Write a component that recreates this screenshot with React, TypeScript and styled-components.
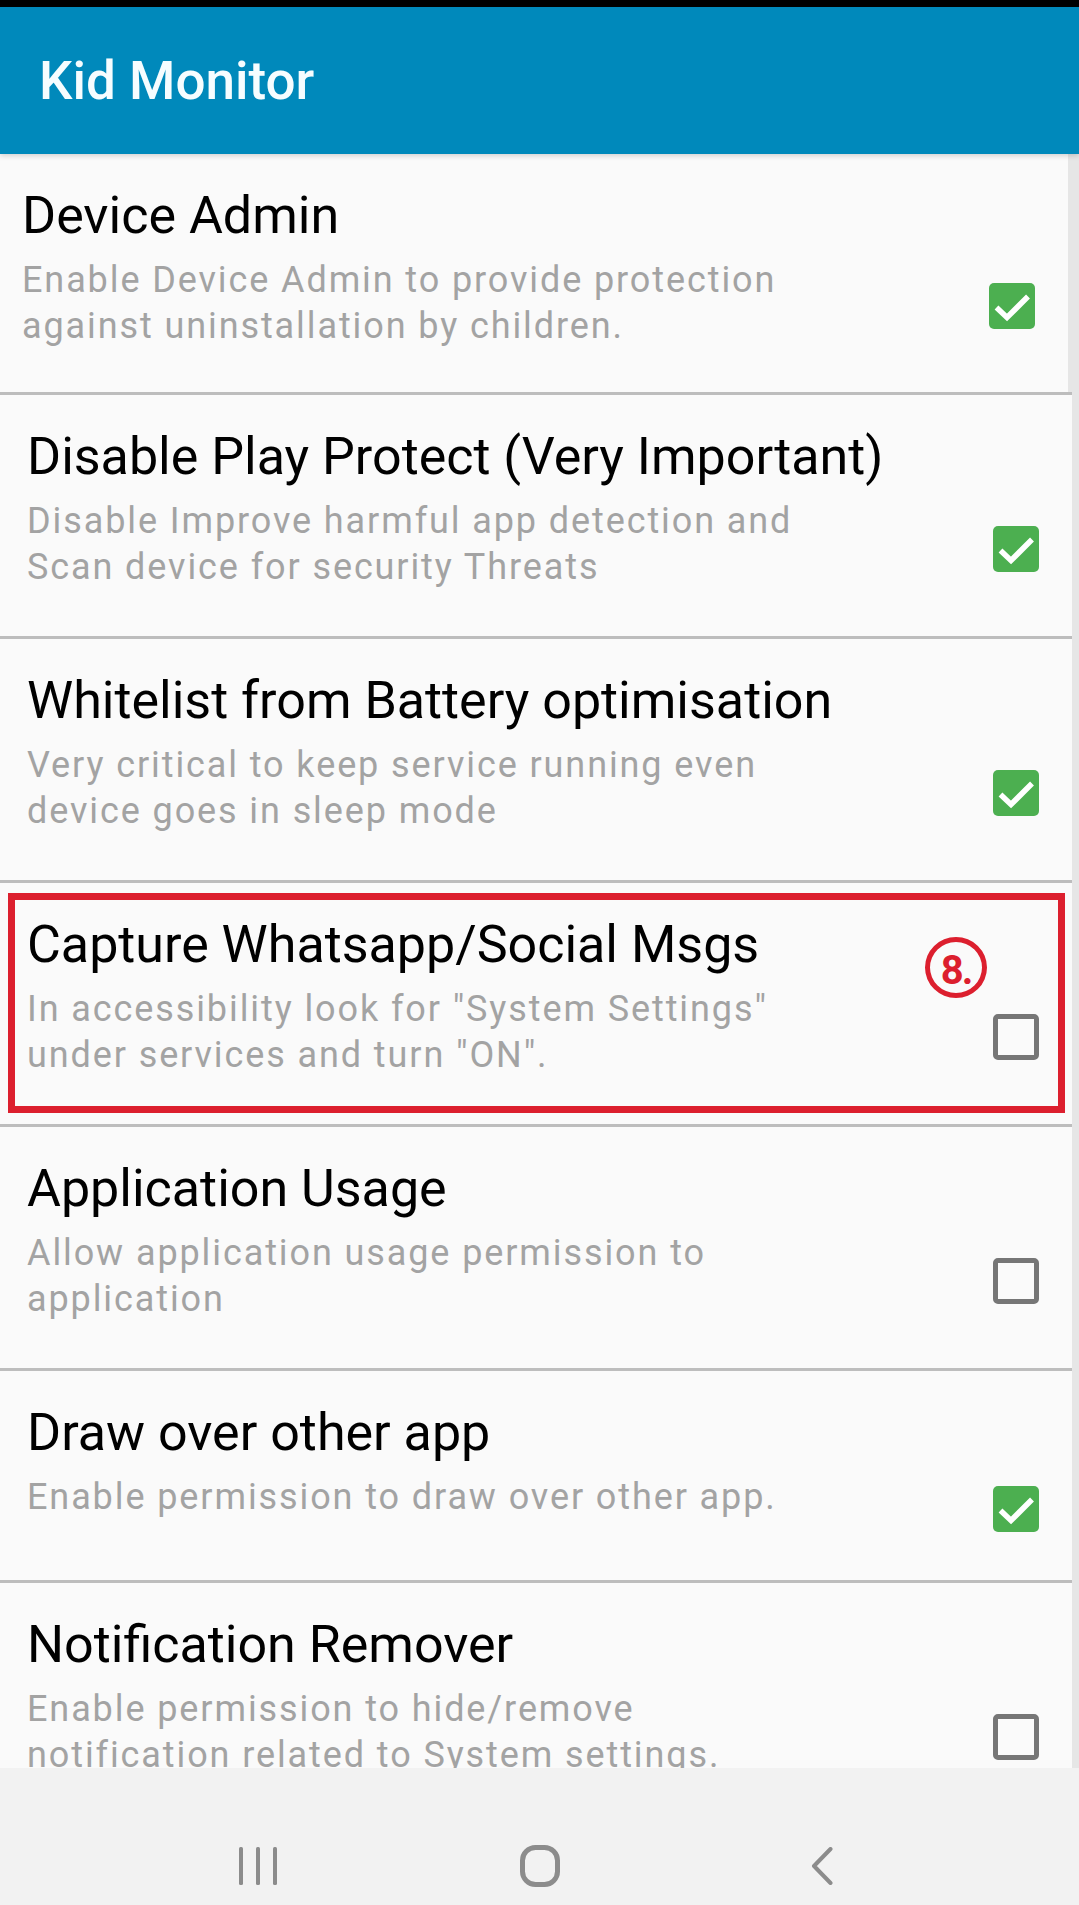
import React from "react";
import styled, { createGlobalStyle } from "styled-components";

const GlobalStyle = createGlobalStyle`
  html, body { margin: 0; padding: 0; background: #e6e6e6; }
  body { font-family: Roboto, "Noto Sans", "Liberation Sans", sans-serif; }
  * { box-sizing: border-box; }
`;

const Screen = styled.div`
  width: 1079px;
  height: 1905px;
  display: flex;
  flex-direction: column;
  overflow: hidden;
  background: #e6e6e6;
`;

const StatusBar = styled.div`
  height: 7px;
  flex-shrink: 0;
  background: #000;
`;

const AppBar = styled.header`
  height: 147px;
  flex-shrink: 0;
  display: flex;
  align-items: center;
  padding-left: 39px;
  background: #0089bb;
  box-shadow: 0 2px 5px rgba(0, 0, 0, 0.16);
  position: relative;
  z-index: 1;
`;

const AppTitle = styled.h1`
  margin: 0;
  font-family: Roboto, "Noto Sans", sans-serif;
  font-weight: 500;
  font-size: 53px;
  line-height: 60px;
  color: #f6fdff;
`;

const List = styled.main`
  flex: 1;
  min-height: 0;
  overflow: hidden;
  display: flex;
  flex-direction: column;
`;

const Item = styled.section<{ $first?: boolean }>`
  position: relative;
  flex-shrink: 0;
  display: flex;
  width: ${(p) => (p.$first ? 1068 : 1072)}px;
  min-height: ${(p) => (p.$first ? 209 : 212)}px;
  background: #fafafa;
  border-top: ${(p) => (p.$first ? "none" : "3px solid #bdbdbd")};
`;

const TextCol = styled.div<{ $first?: boolean }>`
  flex: 1;
  min-width: 0;
  padding: 32px 0 ${(p) => (p.$first ? 43 : 46)}px ${(p) => (p.$first ? 22 : 27)}px;
`;

const Title = styled.h2`
  margin: 0;
  font-weight: 400;
  font-size: 52px;
  line-height: 60px;
  color: #000;
  white-space: nowrap;
`;

const Subtitle = styled.p`
  margin: 11px 0 0;
  font-size: 36px;
  line-height: 46px;
  letter-spacing: 1.9px;
  color: #a3a3a3;
`;

const Line = styled.span`
  display: block;
  white-space: nowrap;
`;

const CheckCol = styled.div`
  flex-shrink: 0;
  display: flex;
  align-items: center;
  padding: 66px 33px 0 0;
`;

const Box = styled.span<{ $checked: boolean }>`
  width: 46px;
  height: 46px;
  border-radius: 5px;
  display: flex;
  align-items: center;
  justify-content: center;
  background: ${(p) => (p.$checked ? "#4caf50" : "transparent")};
  border: ${(p) => (p.$checked ? "none" : "5px solid #767676")};
`;

const Highlight = styled.div`
  position: absolute;
  left: 8px;
  top: 10px;
  width: 1057px;
  height: 220px;
  border: 7px solid #dc1f2e;
  pointer-events: none;
`;

const Badge = styled.div`
  position: absolute;
  left: 925px;
  top: 54px;
  width: 62px;
  height: 61px;
  border-radius: 50%;
  border: 5px solid #dc1f2e;
  display: flex;
  align-items: center;
  justify-content: center;
  padding-top: 6px;
  color: #dc1f2e;
  font-weight: 700;
  font-size: 40px;
  line-height: 1;
  letter-spacing: -2px;
`;

const NavBar = styled.nav`
  height: 137px;
  flex-shrink: 0;
  display: flex;
  justify-content: center;
  align-items: flex-start;
  padding-top: 77px;
  background: #f2f2f2;
`;

const NavSlot = styled.div`
  width: 282px;
  height: 42px;
  display: flex;
  align-items: center;
  justify-content: center;
`;

const Check = () => (
  <svg width="46" height="46" viewBox="0 0 46 46">
    <polyline
      points="7.5,24.5 18,34.5 39,13.5"
      fill="none"
      stroke="#fff"
      strokeWidth="5.5"
    />
  </svg>
);

const RecentsIcon = () => (
  <svg width="38" height="38" viewBox="0 0 38 38">
    <rect x="0" y="0" width="4" height="38" rx="1.5" fill="#8c8c8c" />
    <rect x="17" y="0" width="4" height="38" rx="1.5" fill="#8c8c8c" />
    <rect x="34" y="0" width="4" height="38" rx="1.5" fill="#8c8c8c" />
  </svg>
);

const HomeIcon = () => (
  <svg width="40" height="42" viewBox="0 0 40 42">
    <rect
      x="2.5"
      y="2.5"
      width="35"
      height="37"
      rx="13"
      fill="none"
      stroke="#8c8c8c"
      strokeWidth="5"
    />
  </svg>
);

const BackIcon = () => (
  <svg width="22" height="38" viewBox="0 0 22 38">
    <polyline
      points="19.5,2 3,19 19.5,36"
      fill="none"
      stroke="#8c8c8c"
      strokeWidth="4"
      strokeLinecap="round"
      strokeLinejoin="round"
    />
  </svg>
);

type Perm = {
  title: string;
  lines: string[];
  checked: boolean;
  annotated?: boolean;
};

const perms: Perm[] = [
  {
    title: "Device Admin",
    lines: ["Enable Device Admin to provide protection", "against uninstallation by children."],
    checked: true,
  },
  {
    title: "Disable Play Protect (Very Important)",
    lines: ["Disable Improve harmful app detection and", "Scan device for security Threats"],
    checked: true,
  },
  {
    title: "Whitelist from Battery optimisation",
    lines: ["Very critical to keep service running even", "device goes in sleep mode"],
    checked: true,
  },
  {
    title: "Capture Whatsapp/Social Msgs",
    lines: ['In accessibility look for "System Settings"', 'under services and turn "ON".'],
    checked: false,
    annotated: true,
  },
  {
    title: "Application Usage",
    lines: ["Allow application usage permission to", "application"],
    checked: false,
  },
  {
    title: "Draw over other app",
    lines: ["Enable permission to draw over other app."],
    checked: true,
  },
  {
    title: "Notification Remover",
    lines: ["Enable permission to hide/remove", "notification related to System settings."],
    checked: false,
  },
];

export default function App() {
  return (
    <>
      <GlobalStyle />
      <Screen>
        <StatusBar />
        <AppBar>
          <AppTitle>Kid Monitor</AppTitle>
        </AppBar>
        <List>
          {perms.map((p, i) => (
            <Item key={p.title} $first={i === 0}>
              <TextCol $first={i === 0}>
                <Title>{p.title}</Title>
                <Subtitle>
                  {p.lines.map((l) => (
                    <Line key={l}>{l}</Line>
                  ))}
                </Subtitle>
              </TextCol>
              <CheckCol>
                <Box $checked={p.checked}>{p.checked && <Check />}</Box>
              </CheckCol>
              {p.annotated && (
                <>
                  <Highlight />
                  <Badge>8.</Badge>
                </>
              )}
            </Item>
          ))}
        </List>
        <NavBar>
          <NavSlot>
            <RecentsIcon />
          </NavSlot>
          <NavSlot>
            <HomeIcon />
          </NavSlot>
          <NavSlot>
            <BackIcon />
          </NavSlot>
        </NavBar>
      </Screen>
    </>
  );
}
